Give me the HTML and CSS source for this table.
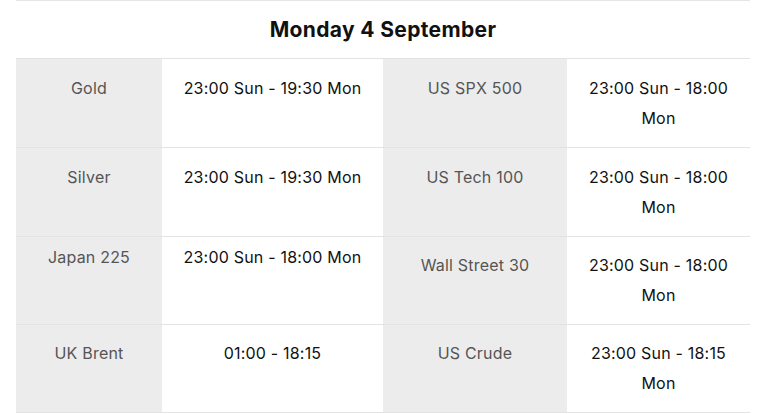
FILE: index.html
```html
<!DOCTYPE html>
<html lang="en">
<head>
<meta charset="utf-8">
<title>Trading hours</title>
<link rel="stylesheet" href="styles.css">
</head>
<body>
<div class="schedule">
  <h2 class="schedule__title">Monday 4 September</h2>
  <div class="schedule__table">
    <div class="row">
      <div class="cell cell--label">Gold</div>
      <div class="cell cell--value">23:00 Sun - 19:30 Mon</div>
      <div class="cell cell--label">US SPX 500</div>
      <div class="cell cell--value">23:00 Sun - 18:00 Mon</div>
    </div>
    <div class="row">
      <div class="cell cell--label">Silver</div>
      <div class="cell cell--value">23:00 Sun - 19:30 Mon</div>
      <div class="cell cell--label">US Tech 100</div>
      <div class="cell cell--value">23:00 Sun - 18:00 Mon</div>
    </div>
    <div class="row row--short">
      <div class="cell cell--label cell--raised">Japan 225</div>
      <div class="cell cell--value cell--raised">23:00 Sun - 18:00 Mon</div>
      <div class="cell cell--label">Wall Street 30</div>
      <div class="cell cell--value">23:00 Sun - 18:00 Mon</div>
    </div>
    <div class="row row--short row--last">
      <div class="cell cell--label">UK Brent</div>
      <div class="cell cell--value">01:00 - 18:15</div>
      <div class="cell cell--label">US Crude</div>
      <div class="cell cell--value">23:00 Sun - 18:15 Mon</div>
    </div>
  </div>
</div>
</body>
</html>
```
FILE: styles.css
```css
html, body {
  margin: 0;
  padding: 0;
  background: #ffffff;
}

body {
  font-family: Inter, "Noto Sans", "Liberation Sans", sans-serif;
  color: #111111;
}

.schedule {
  margin-left: 16px;
  width: 734px;
}

.schedule__title {
  margin: 0;
  height: 57px;
  border-top: 1px solid #e6e6e6;
  box-sizing: content-box;
  display: flex;
  align-items: center;
  justify-content: center;
  font-size: 21px;
  letter-spacing: 0.35px;
  font-weight: 700;
  color: #111111;
}

.row {
  display: grid;
  grid-template-columns: 146px 221px 184px 183px;
  border-top: 1px solid #e3e3e3;
}

.row--last {
  border-bottom: 1px solid #e3e3e3;
}

.cell {
  padding: 14px 8px;
  font-size: 16px;
  line-height: 30px;
  letter-spacing: 0.2px;
  text-align: center;
}

.row--short .cell {
  padding-top: 13px;
  padding-bottom: 14px;
}

.row--short .cell--raised {
  padding-top: 5px;
}

.cell--label {
  background: #ececec;
  color: #555555;
}

.cell--value {
  background: #ffffff;
  color: #111111;
}
```
